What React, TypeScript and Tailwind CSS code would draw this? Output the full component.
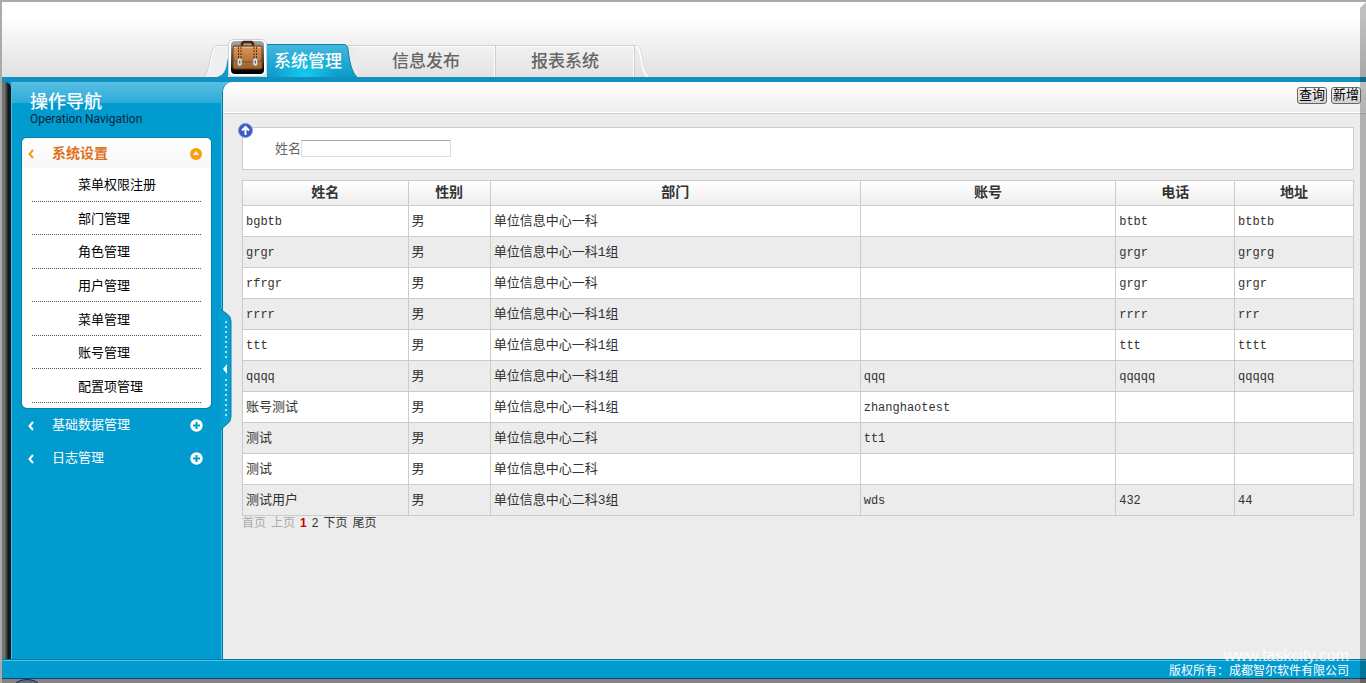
import React, { useState } from 'react';

const menuItems = ['菜单权限注册', '部门管理', '角色管理', '用户管理', '菜单管理', '账号管理', '配置项管理'];
const closedGroups = ['基础数据管理', '日志管理'];
const tabs = ['信息发布', '报表系统'];

const columns = [
  { title: '姓名', width: 'w-[14.9%]' },
  { title: '性别', width: 'w-[7.4%]' },
  { title: '部门', width: 'w-[33.3%]' },
  { title: '账号', width: 'w-[23%]' },
  { title: '电话', width: 'w-[10.7%]' },
  { title: '地址', width: 'w-[10.7%]' },
];

const rows = [
  ['bgbtb', '男', '单位信息中心一科', '', 'btbt', 'btbtb'],
  ['grgr', '男', '单位信息中心一科1组', '', 'grgr', 'grgrg'],
  ['rfrgr', '男', '单位信息中心一科', '', 'grgr', 'grgr'],
  ['rrrr', '男', '单位信息中心一科1组', '', 'rrrr', 'rrr'],
  ['ttt', '男', '单位信息中心一科1组', '', 'ttt', 'tttt'],
  ['qqqq', '男', '单位信息中心一科1组', 'qqq', 'qqqqq', 'qqqqq'],
  ['账号测试', '男', '单位信息中心一科1组', 'zhanghaotest', '', ''],
  ['测试', '男', '单位信息中心二科', 'tt1', '', ''],
  ['测试', '男', '单位信息中心二科', '', '', ''],
  ['测试用户', '男', '单位信息中心二科3组', 'wds', '432', '44'],
];

const isLatin = (text: string) => /^[\x00-\x7f]*$/.test(text);

function BriefcaseIcon() {
  return (
    <svg width="39" height="38" viewBox="0 0 39 38" aria-hidden="true" className="shrink-0">
      <defs>
        <linearGradient id="tile" x1="0" y1="0" x2="0" y2="1">
          <stop offset="0" stopColor="#a9a9a9" />
          <stop offset="0.5" stopColor="#555" />
          <stop offset="0.85" stopColor="#0a0a0a" />
          <stop offset="1" stopColor="#000" />
        </linearGradient>
        <linearGradient id="leather" x1="0" y1="0" x2="0" y2="1">
          <stop offset="0" stopColor="#d99a5c" />
          <stop offset="0.5" stopColor="#c07c3e" />
          <stop offset="1" stopColor="#99602f" />
        </linearGradient>
      </defs>
      <rect x="0.5" y="0.5" width="38" height="37" rx="5" fill="#fff" stroke="#c9d3d6" />
      <rect x="3" y="2" width="33" height="33" rx="4" fill="url(#tile)" />
      <path d="M14 7V4.500L15.500 3h8L25 4.500V7" fill="none" stroke="#4a2411" strokeWidth="2.500" />
      <path d="M5 8.500q0-1.500 1.500-1.500h26q1.500 0 1.500 1.500v20q0 1.500-1.500 1.500h-26q-1.500 0-1.500-1.500z" fill="url(#leather)" stroke="#6e3d18" />
      <path d="M5 20q2 3 5 3h19q3 0 5-3" fill="none" stroke="#7d4a20" />
      <path d="M6 8.500h27" stroke="#edbb82" />
      <path d="M10.500 8v12M13 8v12M26 8v12M28.500 8v12" stroke="#5b3013" strokeDasharray="2 1" />
      <path d="M9.500 20.500q2.250-3 4.500 0v5q-2.250 3-4.500 0zM25 20.500q2.250-3 4.500 0v5q-2.250 3-4.500 0z" fill="#e2e2e2" stroke="#888" strokeWidth="0.600" />
      <path d="M11.750 21.500v3M27.250 21.500v3" stroke="#555" strokeWidth="1.200" />
    </svg>
  );
}

function TabsLeftEdge() {
  return (
    <svg width="24" height="33" viewBox="0 0 24 33" aria-hidden="true" className="shrink-0">
      <path d="M2 33C8 29 6 2 14 2H24V33z" fill="#efefef" />
      <path d="M0 32.500C7 29 5 1.500 13 1.500H24" fill="none" stroke="#d0d0d0" />
      <path d="M1 32.500C8 29 6 2.500 14 2.500H24" fill="none" stroke="#fff" />
      <path d="M13 33C20 31 22 26 23 18L24 14V33z" fill="#109bcb" />
    </svg>
  );
}

function ActiveTabEdge() {
  return (
    <svg width="14" height="33" viewBox="0 0 14 33" aria-hidden="true" className="shrink-0">
      <defs>
        <linearGradient id="tabEdge" x1="0" y1="0" x2="0" y2="1">
          <stop offset="0" stopColor="#43b7df" />
          <stop offset="1" stopColor="#089bca" />
        </linearGradient>
      </defs>
      <path d="M5 1.500H14V33H5z" fill="#ebebeb" />
      <path d="M5 1.500H14" stroke="#d0d0d0" />
      <path d="M5 2.500H14" stroke="#fff" />
      <path d="M0 0.500H1Q4.500 0.500 5 5Q7 27 14 33H0z" fill="url(#tabEdge)" />
      <path d="M0 0.500H1Q4.500 0.500 5 5Q7 27 14 33" fill="none" stroke="#0c82ab" />
    </svg>
  );
}

function TabsRightEdge() {
  return (
    <svg width="14" height="32" viewBox="0 0 14 32" aria-hidden="true" className="shrink-0">
      <path d="M0 0.500H1C9 0.500 5 26 14 32" fill="none" stroke="#d3d3d3" />
      <path d="M0 1.500H0.500C8 1.500 4 26 13 32" fill="none" stroke="#fff" strokeWidth="1.500" />
    </svg>
  );
}

function Chevron({ className }: { className: string }) {
  return (
    <svg width="6" height="10" viewBox="0 0 6 10" aria-hidden="true" className={className}>
      <path d="M5 1L1.500 5L5 9" fill="none" stroke="currentColor" strokeWidth="2" />
    </svg>
  );
}

function Header() {
  return (
    <header className="border-b-[5px] border-[#1191c1] bg-linear-to-b from-white from-20% to-[#e0e0e0] pt-[38px]">
      <nav className="flex h-[37px] items-end pl-[202px] text-[17px] leading-[34px] font-medium">
        <TabsLeftEdge />
        <a href="#system" className="flex h-[37px] items-end text-white">
          <BriefcaseIcon />
          <span className="h-[33px] w-[76px] border-t border-[#0c82ab] bg-[radial-gradient(ellipse_at_bottom,#14cdef,transparent_60%),linear-gradient(#43b7df,#089bca)] pt-px pl-[7px] whitespace-nowrap">
            系统管理
          </span>
          <ActiveTabEdge />
        </a>
        {tabs.map((tab) => (
          <a
            key={tab}
            href="#tab"
            className="h-8 w-[139px] border-t border-r border-t-[#d0d0d0] border-r-[#ccc] bg-linear-to-b from-[#f1f1f1] to-[#e3e3e3] text-center text-[#666] shadow-[inset_-1px_1px_0_#fff]"
          >
            {tab}
          </a>
        ))}
        <TabsRightEdge />
      </nav>
    </header>
  );
}

function Sidebar() {
  return (
    <aside className="relative flex w-[220px] shrink-0 bg-[#019bcf]">
      <div className="w-[9px] shrink-0 rounded-tr-md bg-linear-to-r from-[#73736f] from-30% to-[#101818] to-70%" />
      <div className="grow border-x border-x-[#3fc0e6] bg-[linear-gradient(#58bfe2,#2cabd7_21px,#019bcf_21px)] px-2.5 pt-2">
        <h1 className="pl-2 font-['Noto_Sans_CJK_SC',sans-serif] text-lg leading-5 font-medium text-white">操作导航</h1>
        <p className="pl-2 font-[Roboto,sans-serif] text-xs leading-[18px] text-[#06263a]">Operation Navigation</p>

        <section className="mt-2.5 rounded-[5px] bg-white pb-[5px] shadow-[0_0_0_1px_#0780ad]">
          <button type="button" className="flex h-[30px] w-full items-center rounded-t-[5px] bg-linear-to-b from-white to-[#f9f8f8] pt-0.5 pr-2 pl-1.5 text-[#e0701c]">
            <Chevron className="text-[#f39a1b]" />
            <span className="ml-[18px] grow text-left text-sm font-bold">系统设置</span>
            <svg width="14" height="14" viewBox="0 0 14 14" aria-hidden="true">
              <circle cx="7" cy="7" r="6" fill="#f9a012" />
              <path d="M7 4L10 8H4z" fill="#fff" />
            </svg>
          </button>
          <ul className="mx-2.5 flex h-[235px] flex-col">
            {menuItems.map((item) => (
              <li key={item} className="flex flex-1 items-center border-b border-dotted border-[#555] pt-1 pl-[46px]">
                <a href="#menu" className="text-black">{item}</a>
              </li>
            ))}
          </ul>
        </section>

        {closedGroups.map((group) => (
          <button key={group} type="button" className="flex h-[33px] w-full items-center pt-0.5 pr-2 pl-1.5 text-white">
            <Chevron className="text-white" />
            <span className="ml-[18px] grow text-left">{group}</span>
            <svg width="13" height="13" viewBox="0 0 13 13" aria-hidden="true">
              <circle cx="6.500" cy="6.500" r="6.200" fill="#fff" />
              <path d="M6.500 3v7M3 6.500h7" stroke="#019bcf" strokeWidth="2" />
            </svg>
          </button>
        ))}
      </div>

      {/* collapse handle hanging over the content area */}
      <button type="button" aria-label="收起导航" className="absolute top-[226px] left-[218px] z-10">
        <svg width="12" height="124" viewBox="0 0 12 124" aria-hidden="true">
          <path d="M0 0Q2 3 6 5Q11 8 11 13V109Q11 114 6 117Q2 120 0 123z" fill="#06a0d3" />
          <path d="M1 1Q2 3 6 5Q11 8 11 13V109Q11 114 6 117Q2 120 1 122" fill="none" stroke="#0a7ea8" />
          <path d="M6 13V52M6 71V110" stroke="#a6e0f4" strokeWidth="2" strokeDasharray="2 3" />
          <path d="M7 56V66L3 61z" fill="#fff" />
        </svg>
      </button>
    </aside>
  );
}

function UserTable() {
  return (
    <table className="mt-2.5 w-full table-fixed border-collapse text-[#333]">
      <thead>
        <tr className="h-[25px] bg-linear-to-b from-white to-[#ededed]">
          {columns.map((col) => (
            <th key={col.title} scope="col" className={`border border-[#ccc] p-0 text-center text-sm font-bold ${col.width}`}>
              {col.title}
            </th>
          ))}
        </tr>
      </thead>
      <tbody>
        {rows.map((row, i) => (
          <tr key={i} className="h-[31px] bg-white even:bg-[#ececec]">
            {row.map((cell, j) => (
              <td key={j} className={`border border-[#ccc] pt-0.5 pr-0 pb-0 pl-[3px] ${isLatin(cell) ? 'text-xs' : ''}`}>
                {cell}
              </td>
            ))}
          </tr>
        ))}
      </tbody>
    </table>
  );
}

function Content() {
  const [name, setName] = useState('');

  return (
    <main className="min-w-0 grow bg-[linear-gradient(#58bfe2,#2cabd7_21px,#019bcf_21px)]">
      <div className="h-full rounded-tl-[10px] border-l border-[#08779f] bg-[#ececec]">
        <div className="flex h-[31px] items-start justify-end gap-1 rounded-tl-[10px] border-b border-white bg-linear-to-b from-white to-[#eee] pt-[5px] pr-[5px] shadow-[0_1px_0_#ccc]">
          {['查询', '新增'].map((label) => (
            <button
              key={label}
              type="button"
              className="relative z-20 flex h-[17px] w-[30px] items-center justify-center rounded-[3px] border border-[#666] bg-linear-to-b from-[#f4f4f4] to-[#d2d2d2] pt-px leading-4 text-black"
            >
              {label}
            </button>
          ))}
        </div>
        <div className="pt-3.5 pr-3 pb-4 pl-[19px]">
          <form className="relative flex h-[43px] items-center border border-[#ccc] bg-white pl-8" onSubmit={(e) => e.preventDefault()}>
            <button type="button" aria-label="收起查询" className="absolute -top-[5px] -left-[5px]">
              <svg width="15" height="15" viewBox="0 0 15 15" aria-hidden="true">
                <circle cx="7.500" cy="7.500" r="7" fill="#3d5bc4" stroke="#7e92d8" strokeWidth="0.800" />
                <path d="M7.500 12V4.500M4 7.500L7.500 4L11 7.500" fill="none" stroke="#fff" strokeWidth="2" />
              </svg>
            </button>
            <label htmlFor="name" className="pt-0.5 text-[#666]">姓名</label>
            <input
              id="name"
              value={name}
              onChange={(e) => setName(e.target.value)}
              className="h-[17px] w-[150px] border border-[#ddd] border-t-[#aaa] bg-white px-1 text-xs"
            />
          </form>
          <UserTable />
          <nav className="flex gap-[5px] font-['Liberation_Sans','Noto_Sans_CJK_SC',sans-serif] text-xs leading-[14px] text-[#333]">
            <span className="text-[#aaa]">首页</span>
            <span className="text-[#aaa]">上页</span>
            <b className="text-[#c00]">1</b>
            <a href="#p2">2</a>
            <a href="#next">下页</a>
            <a href="#last">尾页</a>
          </nav>
        </div>
      </div>
    </main>
  );
}

export default function App() {
  return (
    <div className="relative flex min-h-screen flex-col overflow-hidden border-t-2 border-l-2 border-t-[#aaa] border-l-[#aaa] bg-[#ececec] font-['Liberation_Mono','Noto_Sans_CJK_SC',monospace] text-[13px] leading-[18px]">
      <Header />
      <div className="flex grow">
        <Sidebar />
        <Content />
      </div>
      <footer className="relative h-5 border-b border-[#064a66] bg-[#019bcf] shadow-[inset_0_1px_0_#08779f,inset_0_2px_0_#4cc4e8]">
        <p className="pt-1 pr-[17px] text-right text-xs leading-[18px] text-white">版权所有：成都智尔软件有限公司</p>
        <span className="absolute -top-3 right-[17px] font-['Liberation_Sans',sans-serif] text-base leading-[18px] text-white/80">
          www.taskcity.com
        </span>
      </footer>
      <div className="h-1 bg-[#858385]">
        <svg width="30" height="4" viewBox="0 0 30 4" aria-hidden="true" className="ml-2.5">
          <ellipse cx="15" cy="8" rx="13" ry="7.500" fill="#5d6c82" stroke="#1c2d42" />
        </svg>
      </div>

      {/* bevelled window edge */}
      <div className="pointer-events-none absolute inset-y-0 right-0 z-10 w-1.5 bg-black/25 [clip-path:polygon(100%_0,100%_100%,0_100%,0_6px)]" />
    </div>
  );
}
